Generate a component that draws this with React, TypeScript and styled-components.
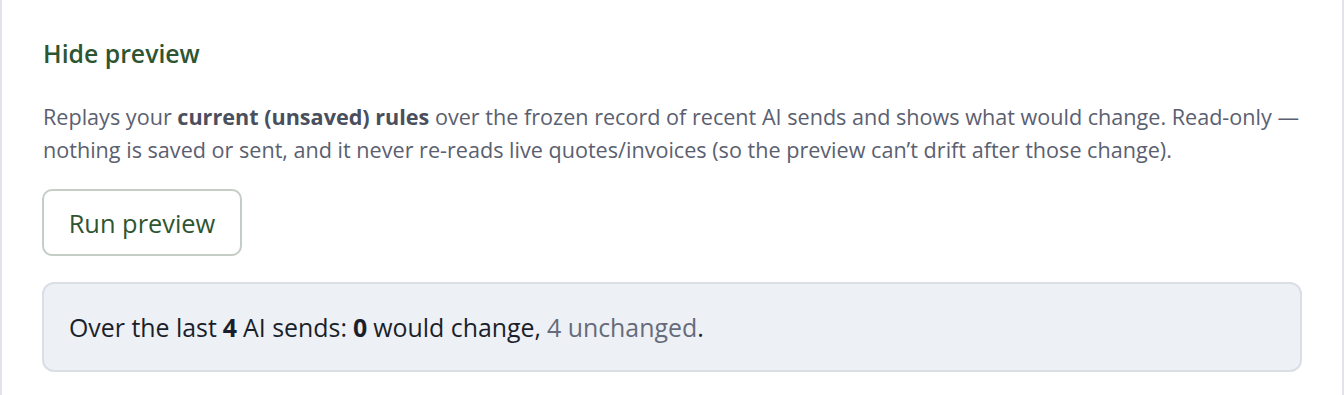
import React from "react";
import styled, { createGlobalStyle } from "styled-components";

const GlobalStyle = createGlobalStyle`
    html, body {
        margin: 0;
        padding: 0;
        background: #ffffff;
    }
    body {
        font-family: "Open Sans", "Noto Sans", "Liberation Sans", sans-serif;
    }
`;

const Card = styled.section`
    box-sizing: border-box;
    width: 1344px;
    height: 395px;
    border-left: 2px solid #e1e5eb;
    border-right: 2px solid #e1e5eb;
    padding: 36px 16px 0 40px;
    background: #ffffff;
`;

const Title = styled.h3`
    margin: 0 0 0 1px;
    font-size: 24.8px;
    line-height: 34px;
    font-weight: 600;
    color: #2e5532;
`;

const Description = styled.p`
    margin: 30px 0 0 1px;
    font-size: 21.6px;
    line-height: 33px;
    color: #5b6070;
    max-width: 1275px;
    & > strong {
        font-weight: 700;
        color: #4a4f5e;
    }
`;

const RunButton = styled.button`
    display: block;
    margin-top: 23px;
    box-sizing: border-box;
    width: 200px;
    height: 67px;
    border: 2px solid #c5cec6;
    border-radius: 10px;
    background: #ffffff;
    font-family: inherit;
    font-size: 25.4px;
    font-weight: 500;
    color: #2e5532;
    cursor: pointer;
`;

const Summary = styled.div`
    box-sizing: border-box;
    margin-top: 26px;
    width: 1260px;
    height: 90px;
    display: flex;
    align-items: center;
    padding: 0 25px;
    background: #edf0f5;
    border: 2px solid #dadee5;
    border-radius: 12px;
    font-size: 24.9px;
    color: #1b1f2b;
    & > strong {
        font-weight: 700;
        margin: 0 6px;
    }
`;

const Muted = styled.span`
    color: #666b7a;
    margin-left: 6px;
`;

const App: React.FC = () => {
    return (
        <>
            <GlobalStyle />
            <Card>
                <Title>Hide preview</Title>
                <Description>
                    Replays your <strong>current (unsaved) rules</strong> over the frozen record of recent AI sends and shows what would change. Read-only — nothing is saved or sent, and it never re-reads live quotes/invoices (so the preview can’t drift after those change).
                </Description>
                <RunButton type="button">Run preview</RunButton>
                <Summary>
                    <span>Over the last</span>
                    <strong>4</strong>
                    <span>AI sends:</span>
                    <strong>0</strong>
                    <span>would change,</span>
                    <Muted>4 unchanged</Muted>
                    <span>.</span>
                </Summary>
            </Card>
        </>
    );
};

export default App;
